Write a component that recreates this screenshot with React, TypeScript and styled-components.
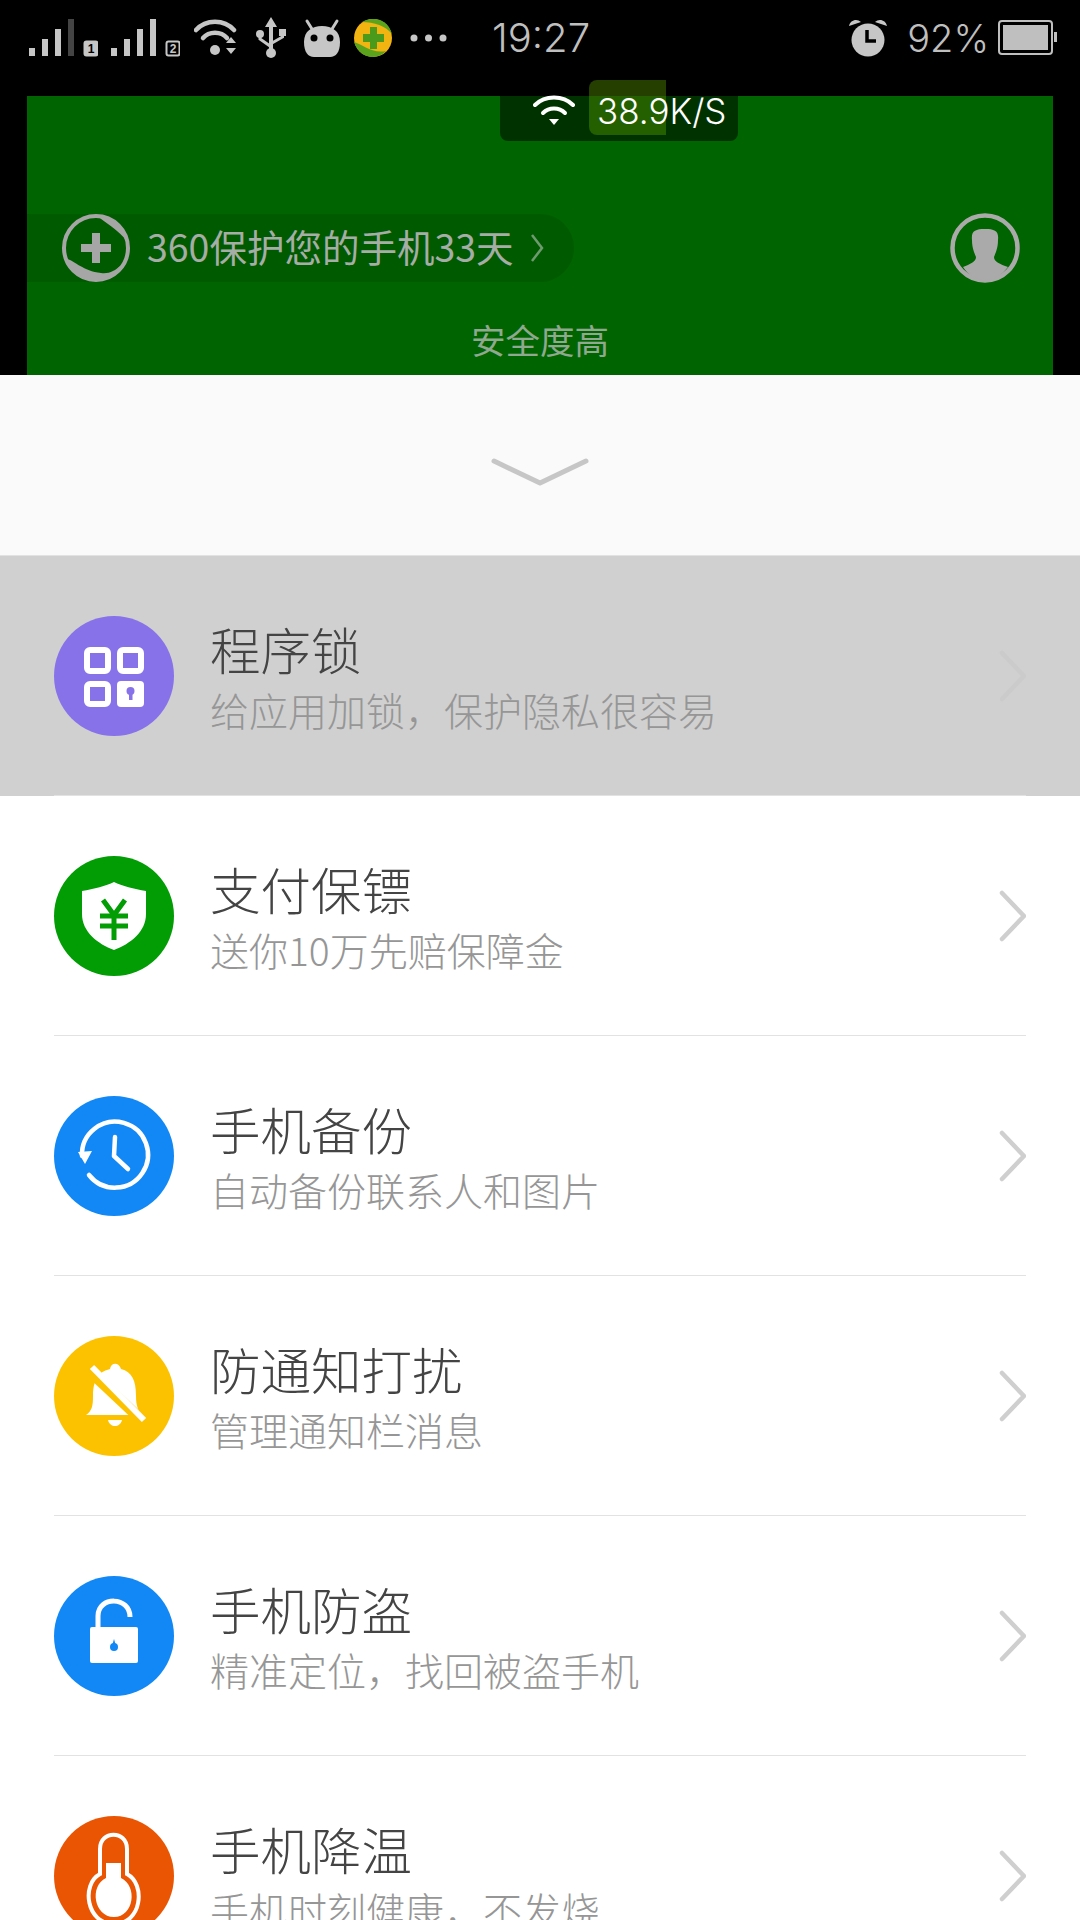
import React from 'react'
import styled, { createGlobalStyle } from 'styled-components'

const GlobalStyle = createGlobalStyle`
  html, body {
    margin: 0;
    padding: 0;
    background: #000;
  }
  body {
    font-family: "Noto Sans CJK SC", "Liberation Sans", sans-serif;
  }
`

const Page = styled.div`
  position: relative;
  width: 1080px;
  height: 1920px;
  overflow: hidden;
  background: #000;
`

const StatusBar = styled.div`
  display: flex;
  align-items: center;
  height: 96px;
  padding: 0 22px 21px 29px;
  box-sizing: border-box;
  color: #bfbfbf;
`

const StatusSlot = styled.span<{ $gap?: number }>`
  display: flex;
  margin-left: ${p => p.$gap ?? 0}px;
`

const Clock = styled.span`
  margin-left: 44px;
  font-family: Inter, sans-serif;
  font-weight: 300;
  font-size: 40px;
`

const StatusRight = styled.div`
  display: flex;
  align-items: center;
  margin-left: auto;
`

const Percent = styled.span`
  margin: 0 9px 0 19px;
  font-family: Inter, sans-serif;
  font-weight: 300;
  font-size: 38px;
`

const SpeedBadge = styled.div`
  position: absolute;
  left: 500px;
  top: 80px;
  width: 238px;
  height: 61px;
  display: flex;
  align-items: center;
  padding-left: 33px;
  box-sizing: border-box;
  border-radius: 0 0 8px 8px;
  background: rgba(0, 0, 0, 0.5);
`

const SpeedFill = styled.div`
  position: absolute;
  left: 89px;
  top: 0;
  width: 77px;
  height: 55px;
  border-radius: 8px 0 0 8px;
  background: rgba(103, 180, 0, 0.35);
`

const SpeedText = styled.span`
  position: relative;
  margin-left: 22px;
  font-family: Inter, sans-serif;
  font-weight: 300;
  font-size: 35px;
  color: #fff;
`

const GreenPanel = styled.section`
  position: relative;
  height: 279px;
  margin: 0 27px;
  background: #006400;
`

const PanelRow = styled.div`
  display: flex;
  align-items: center;
  justify-content: space-between;
  padding: 117px 33px 0 0;
`

const DaysPill = styled.div`
  display: flex;
  align-items: center;
  width: 547px;
  height: 68px;
  padding-left: 34px;
  box-sizing: border-box;
  border-radius: 0 34px 34px 0;
  background: #005a00;
  color: #a6aca6;
  font-size: 37.5px;
`

const DaysText = styled.span`
  margin: 0 16px 5px 16px;
  white-space: nowrap;
`

const SafetyLabel = styled.div`
  margin-top: 32px;
  text-align: center;
  font-size: 34.5px;
  line-height: 48px;
  color: #8fa88f;
`

const Handle = styled.div`
  display: flex;
  align-items: center;
  justify-content: center;
  height: 181px;
  padding-top: 14px;
  border-bottom: 1px solid #e2e2e2;
  box-sizing: border-box;
  background: #fafafa;
`

const List = styled.div`
  background: #fff;
`

const Row = styled.div<{ $active?: boolean }>`
  position: relative;
  display: flex;
  height: 240px;
  padding: 60px 54px 0;
  box-sizing: border-box;
  background: ${p => (p.$active ? '#d0d0d0' : '#fff')};

  &::after {
    content: '';
    position: absolute;
    left: 54px;
    right: 54px;
    bottom: 0;
    height: 1px;
    background: #e2e2e2;
  }
`

const IconCircle = styled.div<{ $color: string }>`
  flex: none;
  width: 120px;
  height: 120px;
  border-radius: 50%;
  background: ${p => p.$color};
`

const RowText = styled.div`
  flex: 1;
  margin: -1px 0 0 36px;
`

const Title = styled.div`
  font-size: 50.5px;
  font-weight: 300;
  line-height: 66px;
  color: #444;
`

const Subtitle = styled.div`
  margin-top: -2px;
  font-size: 39px;
  font-weight: 300;
  line-height: 60px;
  color: #969696;
  white-space: nowrap;
`

const Arrow = styled.div`
  display: flex;
  align-items: center;
  height: 120px;
`

const Signal = ({ dim, sim }: { dim?: boolean; sim: string }) => (
  <svg width="69" height="38" viewBox="0 0 69 38">
    <rect x="0" y="29" width="6" height="8" fill="#c6c6c6" />
    <rect x="13" y="20" width="6" height="17" fill="#c6c6c6" />
    <rect x="26" y="10" width="6" height="27" fill="#c6c6c6" />
    <rect x="39" y="0" width="6" height="37" fill={dim ? '#444' : '#c6c6c6'} />
    <rect x="55.5" y="22.5" width="13" height="14" rx="2" fill={sim === '1' ? '#c6c6c6' : 'none'} stroke="#c6c6c6" strokeWidth="2" />
    <text x="62" y="34" textAnchor="middle" fontSize="12" fontWeight="700" fontFamily="Liberation Sans" fill={sim === '1' ? '#000' : '#c6c6c6'}>{sim}</text>
  </svg>
)

const WifiArrows = () => (
  <svg width="44" height="38" viewBox="0 0 44 38">
    <g fill="none" stroke="#c6c6c6" strokeWidth="4.5" strokeLinecap="round">
      <path d="M2 11 C12 0 30 0 40 11" />
      <path d="M9 19 C15 12 27 12 33 19" />
    </g>
    <circle cx="21" cy="31" r="5" fill="#c6c6c6" />
    <path d="M32 24 L37 18 L42 24 Z M32 29 L42 29 L37 35 Z" fill="#c6c6c6" />
  </svg>
)

const Usb = () => (
  <svg width="30" height="42" viewBox="0 0 30 42">
    <path d="M15 0 L21 10 L17 10 L17 34 L13 34 L13 10 L9 10 Z" fill="#c6c6c6" />
    <circle cx="15" cy="36" r="5" fill="#c6c6c6" />
    <circle cx="4" cy="17" r="4" fill="#c6c6c6" />
    <rect x="23" y="12" width="7" height="7" fill="#c6c6c6" />
    <path d="M4 18 V22 L14 29 M26.500 18 V20 L16 26" fill="none" stroke="#c6c6c6" strokeWidth="3" />
  </svg>
)

const Robot = () => (
  <svg width="36" height="40" viewBox="0 0 36 40">
    <path d="M3 3 L8 11 M33 3 L28 11" stroke="#c6c6c6" strokeWidth="3" strokeLinecap="round" />
    <path d="M0 24 C0 13 8 8 18 8 C28 8 36 13 36 24 C36 34 32 39 26 39 L10 39 C4 39 0 34 0 24 Z" fill="#c6c6c6" />
    <circle cx="10" cy="20" r="3.500" fill="#000" />
    <circle cx="26" cy="20" r="3.500" fill="#000" />
  </svg>
)

const Guard = () => (
  <svg width="38" height="40" viewBox="0 0 38 40">
    <circle cx="19" cy="20" r="19" fill="#f2b411" />
    <path d="M8 4 C18 -2 34 0 38 16 C32 8 20 4 8 4 Z" fill="#5aa41d" />
    <path d="M0 24 C8 26 18 36 32 33 C24 42 6 42 0 24 Z" fill="#5aa41d" />
    <path d="M16 9 H23 V16 H30 V24 H23 V31 H16 V24 H9 V16 H16 Z" fill="#4c9a1c" />
  </svg>
)

const Dots = () => (
  <svg width="38" height="8" viewBox="0 0 38 8">
    <circle cx="4" cy="4" r="3.500" fill="#c6c6c6" />
    <circle cx="18.500" cy="4" r="3.500" fill="#c6c6c6" />
    <circle cx="33" cy="4" r="3.500" fill="#c6c6c6" />
  </svg>
)

const Alarm = () => (
  <svg width="40" height="38" viewBox="0 0 40 38">
    <circle cx="20" cy="21" r="16.500" fill="#c6c6c6" />
    <path d="M1 7 C2 1 9 -1 13 3 Z M39 7 C38 1 31 -1 27 3 Z" fill="#c6c6c6" />
    <path d="M19 11 V22 H28" fill="none" stroke="#000" strokeWidth="3.500" />
  </svg>
)

const Battery = () => (
  <svg width="60" height="36" viewBox="0 0 60 36">
    <rect x="1" y="1" width="53" height="33" rx="3" fill="none" stroke="#bfbfbf" strokeWidth="2" />
    <rect x="5" y="5" width="45" height="25" fill="#bfbfbf" />
    <rect x="56" y="12" width="3" height="10" fill="#bfbfbf" />
  </svg>
)

const SmallWifi = () => (
  <svg width="42" height="32" viewBox="0 0 42 32">
    <g fill="none" stroke="#fff" strokeWidth="4" strokeLinecap="round">
      <path d="M2 10 C12 0 30 0 40 10" />
      <path d="M10 18 C16 12 26 12 32 18" />
    </g>
    <path d="M16 24 L26 24 L21 30 Z" fill="#fff" />
  </svg>
)

const GuardBadge = () => (
  <svg width="70" height="70" viewBox="0 0 70 70">
    <circle cx="35" cy="35" r="32" fill="none" stroke="#a6a6a6" strokeWidth="4" />
    <path d="M35 2 C52 2 66 14 68 32 C62 20 50 14 35 2 Z" fill="#a6a6a6" />
    <path d="M6 46 C14 48 22 58 40 60 C48 61 54 58 60 52 C52 64 42 68 35 68 C22 68 10 60 6 46 Z" fill="#a6a6a6" />
    <path d="M31 20 H39 V31 H50 V39 H39 V50 H31 V39 H20 V31 H31 Z" fill="#a6a6a6" />
  </svg>
)

const Avatar = () => (
  <svg width="70" height="70" viewBox="0 0 70 70">
    <circle cx="35" cy="35" r="32.500" fill="none" stroke="#aaa" strokeWidth="4.500" />
    <path d="M22 27 C21 18 25 16 35 16 C45 16 49 18 48 27 C48 36 45 41 44 44 C44 49 50 51 58 54 C52 62 44 67 35 67 C26 67 18 62 13 54 C20 51 26 49 26 44 C25 41 22 36 22 27 Z" fill="#aaa" />
  </svg>
)

const AppLockIcon = () => (
  <svg width="120" height="120" viewBox="0 0 120 120">
    <g fill="none" stroke="#fff" strokeWidth="6">
      <rect x="33" y="34" width="21" height="21" rx="3" />
      <rect x="66" y="34" width="21" height="21" rx="3" />
      <rect x="33" y="68" width="21" height="20" rx="3" />
    </g>
    <rect x="63" y="65" width="27" height="26" rx="4" fill="#fff" />
    <circle cx="76.500" cy="75" r="4" fill="#8872ea" />
    <rect x="75" y="76" width="3.500" height="8" fill="#8872ea" />
  </svg>
)

const ShieldIcon = () => (
  <svg width="120" height="120" viewBox="0 0 120 120">
    <path d="M60 26 C68 30 80 33 92 35 L92 58 C92 76 76 88 60 94 C44 88 28 76 28 58 L28 35 C40 33 52 30 60 26 Z" fill="#fff" />
    <path d="M49 44 L60 59 L71 44 M46 60 H74 M46 70 H74 M60 58 V84" fill="none" stroke="#029c05" strokeWidth="5" />
  </svg>
)

const HistoryIcon = () => (
  <svg width="120" height="120" viewBox="0 0 120 120">
    <path d="M28 60 A33 33 0 1 1 35 79" fill="none" stroke="#fff" strokeWidth="4.500" strokeLinecap="round" />
    <path d="M24 56 L38 55 L31 68 Z" fill="#fff" />
    <path d="M61 41 L60 60 L74 73" fill="none" stroke="#fff" strokeWidth="4.500" strokeLinecap="round" strokeLinejoin="round" />
  </svg>
)

const BellOffIcon = () => (
  <svg width="120" height="120" viewBox="0 0 120 120">
    <path d="M32 79 C38 75 39 70 39 60 C39 40 48 35 56 33 C57 26 65 26 67 33 C78 36 82 44 82 60 C82 70 84 74 88 79 Z" fill="#fff" />
    <path d="M54 84 H68 C66 92 56 92 54 84 Z" fill="#fff" />
    <path d="M26 26 L94 90" stroke="#fcc200" strokeWidth="11" />
    <path d="M38 31 L90 84" stroke="#fff" strokeWidth="6" />
  </svg>
)

const UnlockIcon = () => (
  <svg width="120" height="120" viewBox="0 0 120 120">
    <path d="M44 52 V40 C44 20 76 20 76 41" fill="none" stroke="#fff" strokeWidth="5" />
    <rect x="36" y="51" width="48" height="36" rx="2" fill="#fff" />
    <circle cx="60" cy="71" r="4" fill="#1188f5" />
    <path d="M58 70 L60 63 L62 70 Z" fill="#1188f5" />
  </svg>
)

const ThermometerIcon = () => (
  <svg width="120" height="120" viewBox="0 0 120 120">
    <path d="M46 58 V33 C46 14 73 14 73 33 V58 C92 68 88 108 60 108 C32 108 27 68 46 58 Z" fill="none" stroke="#fff" strokeWidth="4" />
    <path d="M52 47 H67 V62 C84 70 80 101 60 101 C40 101 35 70 52 62 Z" fill="#fff" />
  </svg>
)

const Chevron = ({ color }: { color: string }) => (
  <svg width="30" height="52" viewBox="0 0 30 52">
    <path d="M6 3 L28 26 L6 49" fill="none" stroke={color} strokeWidth="4.500" strokeLinecap="round" strokeLinejoin="round" />
  </svg>
)

const rows = [
  { title: '程序锁', sub: '给应用加锁，保护隐私很容易', color: '#8872ea', icon: <AppLockIcon />, active: true },
  { title: '支付保镖', sub: '送你10万先赔保障金', color: '#029c05', icon: <ShieldIcon /> },
  { title: '手机备份', sub: '自动备份联系人和图片', color: '#1188f5', icon: <HistoryIcon /> },
  { title: '防通知打扰', sub: '管理通知栏消息', color: '#fcc200', icon: <BellOffIcon /> },
  { title: '手机防盗', sub: '精准定位，找回被盗手机', color: '#1188f5', icon: <UnlockIcon /> },
  { title: '手机降温', sub: '手机时刻健康，不发烧', color: '#ea5504', icon: <ThermometerIcon /> },
]

export default function App() {
  return (
    <Page>
      <GlobalStyle />
      <StatusBar>
        <StatusSlot><Signal dim sim="1" /></StatusSlot>
        <StatusSlot $gap={13}><Signal sim="2" /></StatusSlot>
        <StatusSlot $gap={14}><WifiArrows /></StatusSlot>
        <StatusSlot $gap={18}><Usb /></StatusSlot>
        <StatusSlot $gap={18}><Robot /></StatusSlot>
        <StatusSlot $gap={14}><Guard /></StatusSlot>
        <StatusSlot $gap={18}><Dots /></StatusSlot>
        <Clock>19:27</Clock>
        <StatusRight>
          <Alarm />
          <Percent>92%</Percent>
          <Battery />
        </StatusRight>
      </StatusBar>

      <GreenPanel>
        <PanelRow>
          <DaysPill>
            <GuardBadge />
            <DaysText>360保护您的手机33天</DaysText>
            <svg width="14" height="30" viewBox="0 0 14 30">
              <path d="M2 2 L12 15 L2 28" fill="none" stroke="#6f9a6f" strokeWidth="2.500" />
            </svg>
          </DaysPill>
          <Avatar />
        </PanelRow>
        <SafetyLabel>安全度高</SafetyLabel>
      </GreenPanel>

      <SpeedBadge>
        <SpeedFill />
        <SmallWifi />
        <SpeedText>38.9K/S</SpeedText>
      </SpeedBadge>

      <Handle>
        <svg width="100" height="30" viewBox="0 0 100 30">
          <path d="M4 4 L50 26 L96 4" fill="none" stroke="#c6c6c6" strokeWidth="5" strokeLinecap="round" strokeLinejoin="round" />
        </svg>
      </Handle>

      <List>
        {rows.map(row => (
          <Row key={row.title} $active={row.active}>
            <IconCircle $color={row.color}>{row.icon}</IconCircle>
            <RowText>
              <Title>{row.title}</Title>
              <Subtitle>{row.sub}</Subtitle>
            </RowText>
            <Arrow>
              <Chevron color={row.active ? '#cbcbcb' : '#cfcfcf'} />
            </Arrow>
          </Row>
        ))}
      </List>
    </Page>
  )
}
